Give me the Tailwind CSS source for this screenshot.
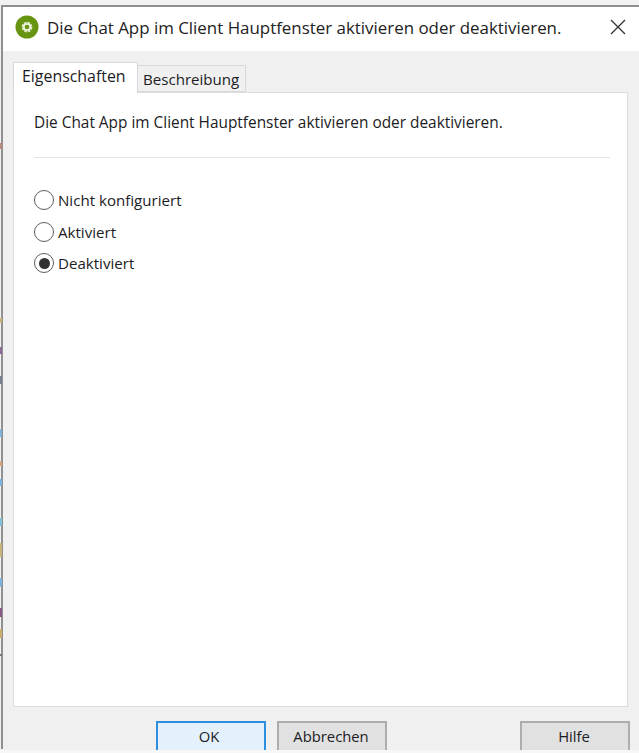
<!DOCTYPE html>
<html lang="de">
<head>
<meta charset="utf-8">
<title>Die Chat App</title>
<script src="https://cdn.jsdelivr.net/npm/@tailwindcss/browser@4"></script>
</head>
<body class="relative w-[639px] h-[753px] overflow-hidden bg-white font-['Open_Sans','Noto_Sans',sans-serif] text-[#1c1c24]">
  <div class="pt-[5px] pl-[1px] h-[749px] bg-[#f2f2f2]">
    <div class="h-[744px] border-t-2 border-l-2 border-[#8f8f8f] flex flex-col">
      <!-- title bar -->
      <div class="h-[44px] shrink-0 bg-white flex items-center pl-[12px] pr-[12px]">
        <svg class="w-[24px] h-[24px] shrink-0 mb-[4px]" viewBox="0 0 24 24">
          <circle cx="12" cy="12" r="11.5" fill="#679512"/>
          <circle cx="12" cy="12" r="4.6" fill="none" stroke="#dfe9c8" stroke-width="1.6" stroke-dasharray="2.6 1"/>
          <circle cx="12" cy="12" r="3.2" fill="none" stroke="#eef3e0" stroke-width="1.8"/>
        </svg>
        <span class="ml-[8px] mb-[2px] text-[16.9px] leading-none text-[#222] whitespace-nowrap">Die Chat App im Client Hauptfenster aktivieren oder deaktivieren.</span>
        <svg class="ml-auto mr-[1px] mb-[4px] w-[16px] h-[16px]" viewBox="0 0 16 16" fill="none" stroke="#333" stroke-width="1.3">
          <path d="M1 1 15 15M15 1 1 15"/>
        </svg>
      </div>
      <!-- client area -->
      <div class="flex-1 bg-[#f0f0f0] flex flex-col pl-[10px] pr-[11px]">
        <!-- tabs -->
        <div class="h-[41px] shrink-0 flex items-end relative z-10">
          <div class="h-[31px] w-[125px] -mb-px bg-white border border-b-0 border-[#d9d9d9] text-[15.9px] leading-[22px] pl-[8px] pt-[2px] whitespace-nowrap">Eigenschaften</div>
          <div class="h-[27px] w-[108px] bg-[#f0f0f0] border border-l-0 border-[#d9d9d9] text-[15.1px] leading-[22px] pl-[5px] pt-[2px] whitespace-nowrap">Beschreibung</div>
        </div>
        <!-- panel -->
        <div class="h-[615px] shrink-0 bg-white border border-[#dcdcdc] pl-[20px] pr-[17px]">
          <p class="pt-[20px] text-[15.4px] leading-[20px] whitespace-nowrap">Die Chat App im Client Hauptfenster aktivieren oder deaktivieren.</p>
          <div class="mt-[24px] h-px bg-[#dde3e8]"></div>
          <div class="mt-[32px] flex flex-col gap-[11.5px] text-[15.1px] leading-[20px]">
            <div class="flex items-center h-[20px]">
              <span class="w-[20px] h-[20px] rounded-full border-[1.5px] border-[#5c5c5c] bg-white"></span>
              <span class="ml-[4px]">Nicht konfiguriert</span>
            </div>
            <div class="flex items-center h-[20px]">
              <span class="w-[20px] h-[20px] rounded-full border-[1.5px] border-[#5c5c5c] bg-white"></span>
              <span class="ml-[4px]">Aktiviert</span>
            </div>
            <div class="flex items-center h-[20px]">
              <span class="w-[20px] h-[20px] rounded-full border-[1.5px] border-[#5c5c5c] bg-white flex items-center justify-center">
                <span class="w-[11px] h-[11px] rounded-full bg-[#333]"></span>
              </span>
              <span class="ml-[4px]">Deaktiviert</span>
            </div>
          </div>
        </div>
        <!-- buttons -->
        <div class="flex-1 flex items-start pt-[14px] text-[14.8px] leading-[20px]">
          <div class="ml-[143px] w-[110px] h-[29px] bg-[#e4f0fb] border-2 border-b-0 border-[#2f8fdf] text-center pt-[3px] pr-[4px]">OK</div>
          <div class="ml-[11px] w-[110px] h-[29px] bg-[#e1e1e1] border-2 border-b-0 border-[#adadad] text-center pt-[3px] pr-[2px]">Abbrechen</div>
          <div class="ml-auto mr-[-2px] w-[110px] h-[29px] bg-[#e1e1e1] border-2 border-b-0 border-[#adadad] text-center pt-[3px] pr-[2px]">Hilfe</div>
        </div>
      </div>
    </div>
  </div>
  <div class="h-[4px] bg-[#f7f7f7]"></div>
  <!-- bits of the window behind, showing at the left edge -->
  <span class="absolute left-0 top-[143px] w-[2px] h-[6px] bg-[#b98a7a]"></span>
  <span class="absolute left-0 top-[318px] w-[2px] h-[5px] bg-[#c9b27a]"></span>
  <span class="absolute left-0 top-[347px] w-[2px] h-[7px] bg-[#8a6a96]"></span>
  <span class="absolute left-0 top-[376px] w-[2px] h-[8px] bg-[#7a7f92]"></span>
  <span class="absolute left-0 top-[429px] w-[2px] h-[8px] bg-[#7fb3de]"></span>
  <span class="absolute left-0 top-[461px] w-[2px] h-[5px] bg-[#d9a37a]"></span>
  <span class="absolute left-0 top-[479px] w-[2px] h-[7px] bg-[#7fb3de]"></span>
  <span class="absolute left-0 top-[518px] w-[2px] h-[8px] bg-[#7fc0d8]"></span>
  <span class="absolute left-0 top-[543px] w-[2px] h-[14px] bg-[#c9b27a]"></span>
  <span class="absolute left-0 top-[578px] w-[2px] h-[9px] bg-[#7fb3de]"></span>
  <span class="absolute left-0 top-[608px] w-[2px] h-[9px] bg-[#8a5a86]"></span>
  <span class="absolute left-0 top-[629px] w-[2px] h-[9px] bg-[#c9ad6a]"></span>
  <span class="absolute left-0 top-[654px] w-[2px] h-[2px] bg-[#777]"></span>
</body>
</html>
